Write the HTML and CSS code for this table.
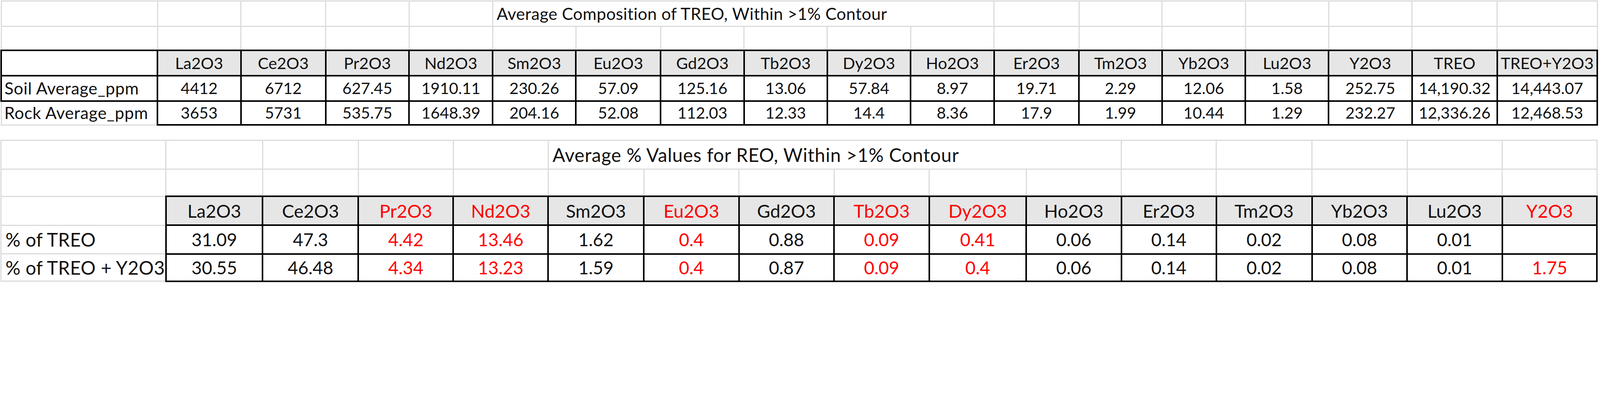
FILE: index.html
```html
<!DOCTYPE html>
<html>
<head>
<meta charset="utf-8">
<link rel="stylesheet" href="styles.css">
</head>
<body>
<table class="sheet top">
  <colgroup>
    <col><col><col><col><col><col><col><col><col><col><col><col><col><col><col><col><col><col>
  </colgroup>
  <tr class="r1">
    <td></td><td></td><td></td><td></td><td></td>
    <td class="title" colspan="6">Average Composition of TREO, Within &gt;1% Contour</td>
    <td></td><td></td><td></td><td></td><td></td><td></td><td></td>
  </tr>
  <tr class="r2">
    <td></td><td></td><td></td><td></td><td></td><td></td><td></td><td></td><td></td><td></td><td></td><td></td><td></td><td></td><td></td><td></td><td></td><td></td>
  </tr>
  <tr class="r3">
    <td class="k"></td>
    <td class="k hd">La2O3</td><td class="k hd">Ce2O3</td><td class="k hd">Pr2O3</td><td class="k hd">Nd2O3</td><td class="k hd">Sm2O3</td><td class="k hd">Eu2O3</td><td class="k hd">Gd2O3</td><td class="k hd">Tb2O3</td><td class="k hd">Dy2O3</td><td class="k hd">Ho2O3</td><td class="k hd">Er2O3</td><td class="k hd">Tm2O3</td><td class="k hd">Yb2O3</td><td class="k hd">Lu2O3</td><td class="k hd">Y2O3</td><td class="k hd">TREO</td><td class="k hd">TREO+Y2O3</td>
  </tr>
  <tr class="r4">
    <td class="lbl kl">Soil Average_ppm</td>
    <td class="k">4412</td><td class="k">6712</td><td class="k">627.45</td><td class="k">1910.11</td><td class="k">230.26</td><td class="k">57.09</td><td class="k">125.16</td><td class="k">13.06</td><td class="k">57.84</td><td class="k">8.97</td><td class="k">19.71</td><td class="k">2.29</td><td class="k">12.06</td><td class="k">1.58</td><td class="k">252.75</td><td class="k">14,190.32</td><td class="k">14,443.07</td>
  </tr>
  <tr class="r5">
    <td class="lbl">Rock Average_ppm</td>
    <td class="k">3653</td><td class="k">5731</td><td class="k">535.75</td><td class="k">1648.39</td><td class="k">204.16</td><td class="k">52.08</td><td class="k">112.03</td><td class="k">12.33</td><td class="k">14.4</td><td class="k">8.36</td><td class="k">17.9</td><td class="k">1.99</td><td class="k">10.44</td><td class="k">1.29</td><td class="k">232.27</td><td class="k">12,336.26</td><td class="k">12,468.53</td>
  </tr>
</table>

<table class="sheet bottom">
  <colgroup>
    <col><col><col><col><col><col><col><col><col><col><col><col><col><col><col><col>
  </colgroup>
  <tr class="r1">
    <td></td><td></td><td></td><td></td><td></td>
    <td class="title" colspan="6">Average % Values for REO, Within &gt;1% Contour</td>
    <td></td><td></td><td></td><td></td><td></td>
  </tr>
  <tr class="r2">
    <td></td><td></td><td></td><td></td><td></td><td></td><td></td><td></td><td></td><td></td><td></td><td></td><td></td><td></td><td></td><td></td>
  </tr>
  <tr class="r3">
    <td></td>
    <td class="k hd">La2O3</td><td class="k hd">Ce2O3</td><td class="k hd red">Pr2O3</td><td class="k hd red">Nd2O3</td><td class="k hd">Sm2O3</td><td class="k hd red">Eu2O3</td><td class="k hd">Gd2O3</td><td class="k hd red">Tb2O3</td><td class="k hd red">Dy2O3</td><td class="k hd">Ho2O3</td><td class="k hd">Er2O3</td><td class="k hd">Tm2O3</td><td class="k hd">Yb2O3</td><td class="k hd">Lu2O3</td><td class="k hd red">Y2O3</td>
  </tr>
  <tr class="r4">
    <td class="lbl">% of TREO</td>
    <td class="k">31.09</td><td class="k">47.3</td><td class="k red">4.42</td><td class="k red">13.46</td><td class="k">1.62</td><td class="k red">0.4</td><td class="k">0.88</td><td class="k red">0.09</td><td class="k red">0.41</td><td class="k">0.06</td><td class="k">0.14</td><td class="k">0.02</td><td class="k">0.08</td><td class="k">0.01</td><td class="k red"></td>
  </tr>
  <tr class="r5">
    <td class="lbl">% of TREO + Y2O3</td>
    <td class="k">30.55</td><td class="k">46.48</td><td class="k red">4.34</td><td class="k red">13.23</td><td class="k">1.59</td><td class="k red">0.4</td><td class="k">0.87</td><td class="k red">0.09</td><td class="k red">0.4</td><td class="k">0.06</td><td class="k">0.14</td><td class="k">0.02</td><td class="k">0.08</td><td class="k">0.01</td><td class="k red">1.75</td>
  </tr>
</table>
</body>
</html>
```
FILE: styles.css
```css
/* one unit = one pixel of the 5735px-wide reference */
:root {
  --u: calc(100vw / 5735);
}
html, body {
  margin: 0;
  padding: 0;
  background: #ffffff;
}
html {
  overflow: hidden;
}
body {
  width: 100vw;
  height: calc(1020 * var(--u));
  overflow: hidden;
  font-family: Lato, "Open Sans", "Liberation Sans", sans-serif;
  color: #111111;
}
.sheet {
  border-collapse: collapse;
  table-layout: fixed;
  margin-left: calc(1.5 * var(--u));
}
.sheet td {
  border: calc(5 * var(--u)) solid #dcdcdc;
  padding: 0;
  text-align: center;
  vertical-align: middle;
  white-space: nowrap;
  overflow: hidden;
  line-height: 1;
}
.sheet td.k {
  border: calc(7 * var(--u)) solid #000000;
}
.sheet td.kl {
  border-left: calc(7 * var(--u)) solid #000000;
  border-bottom: calc(7 * var(--u)) solid #000000;
}
.sheet td.hd {
  background: #e6e6e6;
}
.sheet td.lbl {
  text-align: left;
}
.sheet td.title {
  text-align: left;
  overflow: visible;
}
.sheet td.red {
  color: #ff0000;
}

/* ---------- top table ---------- */
.top {
  width: calc(5721 * var(--u));
  margin-top: calc(1.5 * var(--u));
  font-size: calc(60 * var(--u));
  letter-spacing: calc(0.6 * var(--u));
}
.top td.k { font-size: calc(57 * var(--u)); letter-spacing: 0; }
.top td.hd { font-size: calc(58 * var(--u)); }
.top td.title { padding-left: calc(12 * var(--u)); }
.top td.lbl { padding-left: calc(9 * var(--u)); letter-spacing: calc(1 * var(--u)); }
.top col { width: calc(299 * var(--u)); }
.top col:nth-child(1) { width: calc(560 * var(--u)); }
.top col:nth-child(3) { width: calc(304 * var(--u)); }
.top col:nth-child(5) { width: calc(300 * var(--u)); }
.top col:nth-child(6) { width: calc(298 * var(--u)); }
.top col:nth-child(7) { width: calc(304 * var(--u)); }
.top col:nth-child(9) { width: calc(298 * var(--u)); }
.top col:nth-child(12) { width: calc(304 * var(--u)); }
.top col:nth-child(13) { width: calc(298 * var(--u)); }
.top col:nth-child(15) { width: calc(298 * var(--u)); }
.top col:nth-child(17) { width: calc(305 * var(--u)); }
.top col:nth-child(18) { width: calc(359 * var(--u)); }
.top .r1 { height: calc(91 * var(--u)); }
.top .r2 { height: calc(86 * var(--u)); }
.top .r3 { height: calc(91 * var(--u)); }
.top .r4 { height: calc(91 * var(--u)); }
.top .r5 { height: calc(86 * var(--u)); }

/* ---------- bottom table ---------- */
.bottom {
  width: calc(5721 * var(--u));
  margin-top: calc(50 * var(--u));
  font-size: calc(67 * var(--u));
  letter-spacing: calc(1.2 * var(--u));
}
.bottom td.k { font-size: calc(64 * var(--u)); letter-spacing: 0; }
.bottom td.hd { font-size: calc(65 * var(--u)); }
.bottom td.title { padding-left: calc(14 * var(--u)); }
.bottom td.lbl { padding-left: calc(14 * var(--u)); letter-spacing: calc(0.6 * var(--u)); }
.bottom col { width: calc(341 * var(--u)); }
.bottom col:nth-child(1) { width: calc(591 * var(--u)); }
.bottom col:nth-child(2) { width: calc(347 * var(--u)); }
.bottom col:nth-child(3) { width: calc(343 * var(--u)); }
.bottom col:nth-child(4) { width: calc(340 * var(--u)); }
.bottom col:nth-child(5) { width: calc(340 * var(--u)); }
.bottom col:nth-child(6) { width: calc(343 * var(--u)); }
.bottom col:nth-child(10) { width: calc(348 * var(--u)); }
.bottom col:nth-child(12) { width: calc(340 * var(--u)); }
.bottom col:nth-child(13) { width: calc(343 * var(--u)); }
.bottom col:nth-child(16) { width: calc(340 * var(--u)); }
.bottom .r1 { height: calc(104 * var(--u)); }
.bottom .r2 { height: calc(97 * var(--u)); }
.bottom .r3 { height: calc(104 * var(--u)); }
.bottom .r4 { height: calc(103 * var(--u)); }
.bottom .r5 { height: calc(98 * var(--u)); }
```
